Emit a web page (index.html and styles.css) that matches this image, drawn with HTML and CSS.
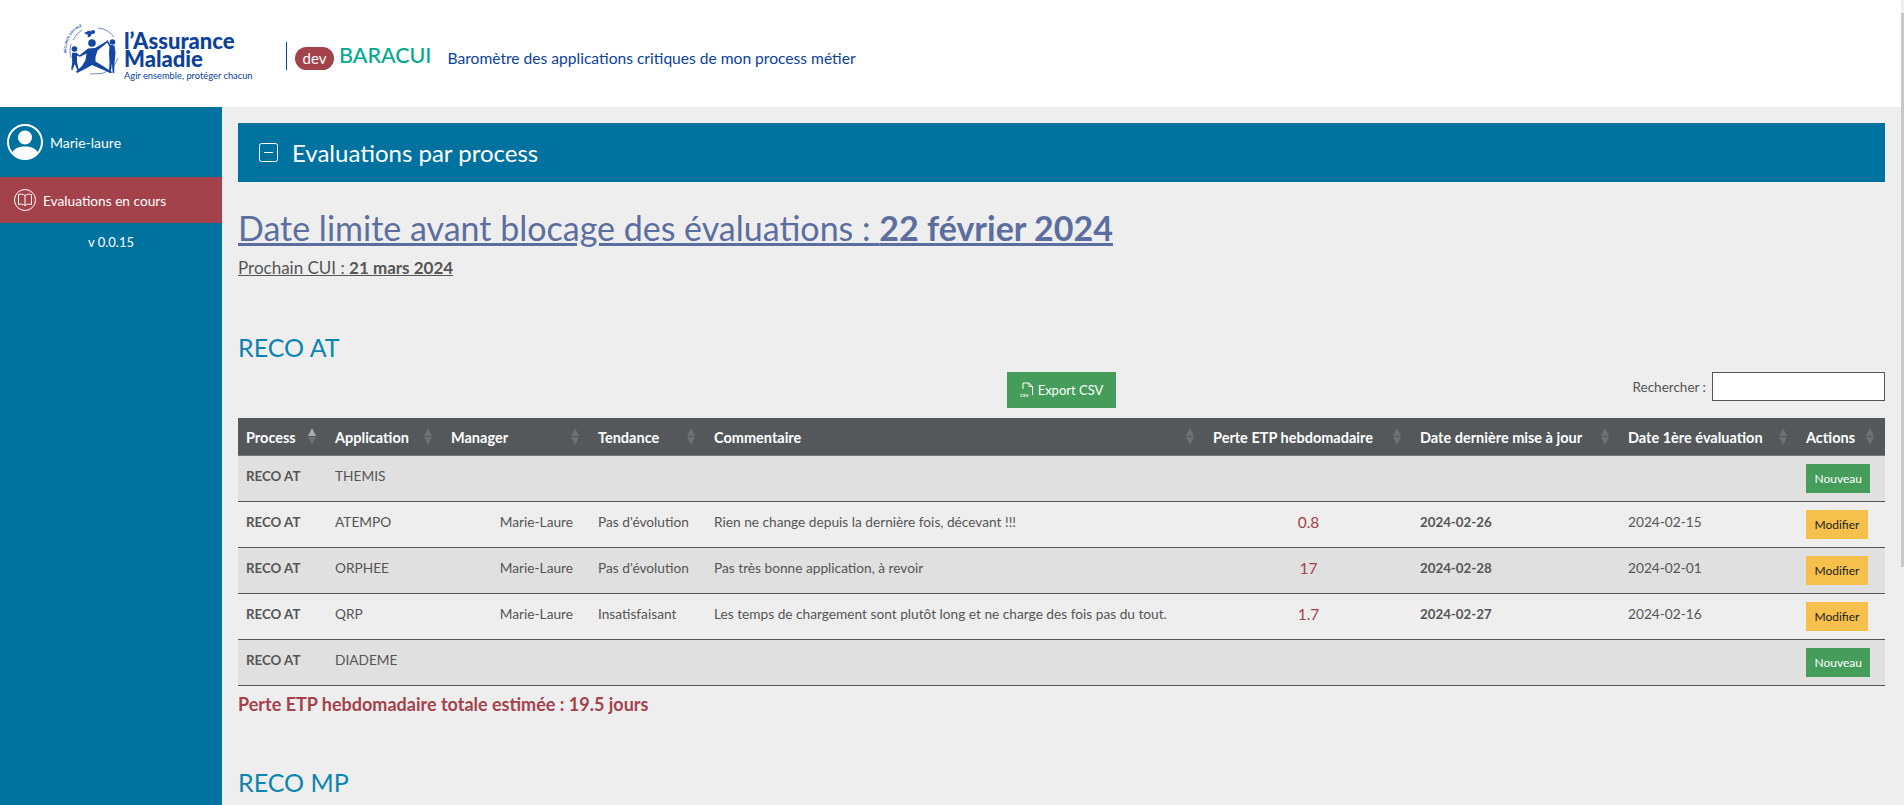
FILE: index.html
```html
<!DOCTYPE html>
<html lang="fr">
<head>
    <meta charset="UTF-8">
    <meta name="viewport" content="width=device-width, initial-scale=1.0">
    <title>BARACUI</title>
    <link rel="stylesheet" href="styles.css">
</head>
<body>
    <header class="topbar">
        <div class="logo">
            <svg class="logo-mark" viewBox="0 0 70 60" aria-hidden="true">
                <defs><path id="logoArc" d="M6.5 33 A27 27 0 0 1 36 3.5"/></defs>
                <text class="logo-arc"><textPath href="#logoArc">SÉCURITÉ SOCIALE</textPath></text>
                <path class="logo-ring" d="M38 8 A22 22 0 0 1 54 17 M58 38 A25 25 0 0 1 42 53.5 L30 54 M11 38 A24 24 0 0 1 11 24 M13 20 A24 24 0 0 1 22 10"/>
                <circle cx="32" cy="23" r="3.8"/>
                <path d="M28 28.500 L35 28 L47 21 L47.800 22.200 L37.500 30.500 L35.500 37 L35.500 41.500 L43 46 L52 52 L51.200 53.200 L40 48.500 L32 45 L25 49 L17 53 L16 51.500 L22 46 L25.500 40 L26.500 33.500 L20 36.800 L19.200 35.500 Z"/>
                <circle cx="14.5" cy="29" r="2.800"/>
                <path d="M12 32.800 L16.500 32.800 L20 35.800 L19.500 36.800 L17 35.500 L17 42 L18.800 50 L17.500 50.500 L14.800 44 L12.500 50 L11.200 49.500 L12.200 42 L12 38 Z"/>
                <circle cx="52.5" cy="22" r="2.800"/>
                <path d="M46.500 20.800 L47.500 20 L50.500 25 L54.500 25.500 L55.500 33 L54.500 43 L54.200 53 L52.600 53 L52 43 L50.500 53 L49 53 L49.500 42 L49 33 L49.500 27 Z"/>
                <circle cx="33" cy="12" r="2"/>
                <path d="M24 13 L27 11.500 L30 10.500 L32 13.500 L30.500 16.500 L27.500 17.500 L28 15 Z"/>
            </svg>
            <div class="logo-text">
                <div class="logo-name">l’Assurance</div>
                <div class="logo-name">Maladie</div>
                <div class="logo-tag">Agir ensemble, protéger chacun</div>
            </div>
        </div>
        <div class="brand">
            <span class="pill">dev</span>
            <span class="brand-name">BARACUI</span>
        </div>
        <div class="subtitle">Baromètre des applications critiques de mon process métier</div>
    </header>

    <div class="layout">
        <nav class="sidebar">
            <div class="profile">
                <svg class="avatar" viewBox="0 0 36 36" aria-hidden="true">
                    <circle class="line" cx="18" cy="18" r="17"/>
                    <circle class="solid" cx="18" cy="13.5" r="7"/>
                    <path class="solid" d="M5.5 28 C8 24 12 22.5 18 22.5 C24 22.5 28 24 30.5 28 C27.5 32 23 34.5 18 34.5 C13 34.5 8.5 32 5.500 28 Z"/>
                </svg>
                <span>Marie-laure</span>
            </div>
            <a class="nav-item" href="#">
                <svg class="nav-icon" viewBox="0 0 22 22" aria-hidden="true">
                    <circle class="line" cx="11" cy="11" r="10.500"/>
                    <path class="line" d="M11 6.500 C9 5 6.500 4.800 4.500 5.500 V15.500 C6.500 14.800 9 15 11 16.500 C13 15 15.500 14.800 17.500 15.500 V5.500 C15.500 4.800 13 5 11 6.500 Z M11 6.500 V16.500"/>
                </svg>
                <span>Evaluations en cours</span>
            </a>
            <div class="version">v 0.0.15</div>
        </nav>

        <main class="content">
            <div class="panel">
                <svg class="panel-icon" viewBox="0 0 19 19" aria-hidden="true">
                    <rect x="0.500" y="0.500" width="18" height="18" rx="2"/>
                    <path d="M5 9.500 H14"/>
                </svg>
                <span>Evaluations par process</span>
            </div>

            <h1 class="deadline">Date limite avant blocage des évaluations : <strong>22 février 2024</strong></h1>
            <p class="next-cui">Prochain CUI : <strong>21 mars 2024</strong></p>

            <section>
                <h2 class="process-title">RECO AT</h2>
                <div class="toolbar">
                    <span></span>
                    <button class="btn-export" type="button">
                        <svg viewBox="0 0 14 16" aria-hidden="true">
                            <path d="M3 7 V1 H9 L12.500 4.500 V13 M9 1 V4.500 H12.500"/>
                            <text x="0" y="14.500">CSV</text>
                        </svg>
                        Export CSV
                    </button>
                    <label class="search">Rechercher : <input type="text"></label>
                </div>
                <table class="eval-table">
                    <thead>
                        <tr>
                            <th class="col-process sorted">Process</th>
                            <th class="col-app">Application</th>
                            <th class="col-manager">Manager</th>
                            <th class="col-trend">Tendance</th>
                            <th class="col-comment">Commentaire</th>
                            <th class="col-loss">Perte ETP hebdomadaire</th>
                            <th class="col-date">Date dernière mise à jour</th>
                            <th class="col-first">Date 1ère évaluation</th>
                            <th class="col-actions">Actions</th>
                        </tr>
                    </thead>
                    <tbody>
                        <tr>
                            <td class="strong">RECO AT</td>
                            <td>THEMIS</td>
                            <td></td><td></td><td></td><td></td><td></td><td></td>
                            <td class="action"><button class="btn btn-new" type="button">Nouveau</button></td>
                        </tr>
                        <tr>
                            <td class="strong">RECO AT</td>
                            <td>ATEMPO</td>
                            <td class="manager">Marie-Laure</td>
                            <td>Pas d'évolution</td>
                            <td>Rien ne change depuis la dernière fois, décevant !!!</td>
                            <td class="loss">0.8</td>
                            <td class="strong">2024-02-26</td>
                            <td>2024-02-15</td>
                            <td class="action"><button class="btn btn-edit" type="button">Modifier</button></td>
                        </tr>
                        <tr>
                            <td class="strong">RECO AT</td>
                            <td>ORPHEE</td>
                            <td class="manager">Marie-Laure</td>
                            <td>Pas d'évolution</td>
                            <td>Pas très bonne application, à revoir</td>
                            <td class="loss">17</td>
                            <td class="strong">2024-02-28</td>
                            <td>2024-02-01</td>
                            <td class="action"><button class="btn btn-edit" type="button">Modifier</button></td>
                        </tr>
                        <tr>
                            <td class="strong">RECO AT</td>
                            <td>QRP</td>
                            <td class="manager">Marie-Laure</td>
                            <td>Insatisfaisant</td>
                            <td>Les temps de chargement sont plutôt long et ne charge des fois pas du tout.</td>
                            <td class="loss">1.7</td>
                            <td class="strong">2024-02-27</td>
                            <td>2024-02-16</td>
                            <td class="action"><button class="btn btn-edit" type="button">Modifier</button></td>
                        </tr>
                        <tr>
                            <td class="strong">RECO AT</td>
                            <td>DIADEME</td>
                            <td></td><td></td><td></td><td></td><td></td><td></td>
                            <td class="action"><button class="btn btn-new" type="button">Nouveau</button></td>
                        </tr>
                    </tbody>
                </table>
                <p class="total">Perte ETP hebdomadaire totale estimée : 19.5 jours</p>
            </section>

            <section>
                <h2 class="process-title next">RECO MP</h2>
            </section>
        </main>
    </div>

    <div class="scrollbar"><div class="scrollbar-thumb"></div></div>
</body>
</html>
```

FILE: styles.css
```css
body {
    font-family: Lato, "Noto Sans", sans-serif;
    font-size: 14px;
    background-color: #eee;
    color: #555;
    margin: 0;
    padding: 0;
}
.scrollbar {
    position: fixed;
    top: 0;
    right: 0;
    bottom: 0;
    width: 3px;
    background-color: #eee;
}
.scrollbar-thumb {
    height: 554px;
    margin-top: 13px;
    background-color: #c8c8c8;
}

/* header */
.topbar {
    display: flex;
    align-items: flex-start;
    height: 107px;
    background-color: #fff;
    color: #0c419a;
}
.logo {
    display: flex;
    margin: 20px 0 0 60px;
    width: 226px;
}
.logo-mark {
    width: 70px;
    height: 60px;
    fill: #1246a0;
    flex: none;
    margin-right: -6px;
}
.logo-ring {
    fill: none;
    stroke: #1246a0;
    stroke-width: 0.6;
}
.logo-arc {
    font-family: "Liberation Sans", sans-serif;
    font-size: 3.4px;
    font-weight: 700;
}
.logo-text {
    margin-top: 12px;
}
.logo-name {
    font-size: 22px;
    font-weight: 900;
    line-height: 18px;
}
.logo-tag {
    font-size: 9.3px;
    line-height: 12px;
    margin-top: 2px;
    white-space: nowrap;
}
.brand {
    display: flex;
    align-items: center;
    height: 28px;
    margin-top: 42px;
    padding-left: 8px;
    border-left: 1px solid #0c419a;
}
.pill {
    display: block;
    width: 39px;
    height: 23px;
    margin-top: 5px;
    line-height: 23px;
    border-radius: 12px;
    background-color: #a4424b;
    color: #fff;
    font-size: 15px;
    text-align: center;
}
.brand-name {
    margin: 0 0 3px 5px;
    color: #00a98f;
    font-size: 21.5px;
    font-weight: 500;
}
.subtitle {
    margin: 47px 0 0 16px;
    font-size: 15.6px;
    line-height: 22px;
}

/* sidebar */
.layout {
    display: flex;
    min-height: 1025px;
}
.sidebar {
    width: 222px;
    flex: none;
    background-color: #00729f;
    color: #fff;
}
.line {
    fill: none;
    stroke: #fff;
}
.solid {
    fill: #fff;
}
.profile {
    display: flex;
    align-items: center;
    height: 70px;
    padding-left: 7px;
    gap: 7px;
}
.avatar {
    width: 36px;
    height: 36px;
}
.avatar .line {
    stroke-width: 2;
}
.nav-item {
    display: flex;
    align-items: center;
    height: 46px;
    padding-left: 14px;
    gap: 7px;
    background-color: #a4424b;
    color: #fff;
    font-size: 13.7px;
    text-decoration: none;
}
.nav-icon {
    width: 22px;
    height: 22px;
}
.version {
    margin-top: 11px;
    font-size: 13px;
    text-align: center;
}

/* main */
.content {
    flex: 1;
    min-width: 0;
    padding: 16px 19px 16px 16px;
}
.panel {
    display: flex;
    align-items: center;
    gap: 14px;
    height: 59px;
    padding-left: 21px;
    background-color: #00729f;
    color: #fff;
    font-size: 24px;
}
.panel-icon {
    width: 19px;
    height: 19px;
    fill: none;
    stroke: #fff;
}
.deadline {
    margin: 24px 0 0;
    font-size: 34px;
    font-weight: 400;
    line-height: 44px;
    color: #5c6ea0;
    text-decoration: underline;
}
.next-cui {
    margin: 6px 0 0;
    font-size: 17px;
    line-height: 24px;
    text-decoration: underline;
}
.process-title {
    margin: 48px 0 0;
    font-size: 25px;
    font-weight: 400;
    line-height: 38px;
    color: #0a85b0;
}
.process-title.next {
    margin-top: 47px;
}
.toolbar {
    display: grid;
    grid-template-columns: 1fr auto 1fr;
    margin-top: 6px;
}
.btn-export {
    display: flex;
    align-items: center;
    justify-content: center;
    gap: 4px;
    width: 109px;
    height: 36px;
    padding: 0;
    border: none;
    background-color: #459c5b;
    color: #fff;
    font-family: inherit;
    font-size: 13px;
}
.btn-export svg {
    width: 14px;
    height: 16px;
}
.btn-export path {
    fill: none;
    stroke: #fff;
}
.btn-export text {
    fill: #fff;
    font-size: 4.5px;
    font-weight: 700;
}
.search {
    display: flex;
    align-items: center;
    justify-self: end;
    align-self: start;
    font-size: 13.5px;
}
.search input {
    width: 173px;
    height: 29px;
    margin-left: 6px;
    padding: 0 4px;
    box-sizing: border-box;
    border: 1px solid #555;
    background-color: #fff;
}

/* table */
.eval-table {
    width: 100%;
    margin-top: 10px;
    table-layout: fixed;
    border-collapse: separate;
    border-spacing: 0;
}
.eval-table th {
    position: relative;
    height: 38px;
    padding: 1px 8px 0;
    box-sizing: border-box;
    border-bottom: 1px solid #777;
    background-color: #54585a;
    color: #fff;
    text-align: left;
    font-size: 14.5px;
    white-space: nowrap;
}
.eval-table th::before,
.eval-table th::after {
    content: "";
    position: absolute;
    right: 11px;
    border-left: 4.500px solid transparent;
    border-right: 4.500px solid transparent;
}
.eval-table th::before {
    top: 10px;
    border-bottom: 8px solid #6e7072;
}
.eval-table th::after {
    top: 19px;
    border-top: 8px solid #6e7072;
}
.eval-table th.sorted::before {
    border-bottom-color: #aaa;
}
.col-process { width: 89px; }
.col-app { width: 116px; }
.col-manager { width: 147px; }
.col-trend { width: 116px; }
.col-loss { width: 207px; }
.col-date { width: 208px; }
.col-first { width: 178px; }
.col-actions { width: 87px; }

.eval-table td {
    padding: 9px 8px 8px;
    border-bottom: 1px solid #555;
    font-size: 13.7px;
    line-height: 22px;
    vertical-align: top;
}
.eval-table td.action {
    padding-top: 8px;
}
.eval-table tbody tr:nth-child(odd) {
    background-color: #e0e0e0;
}
.eval-table td.strong {
    font-size: 13.3px;
    font-weight: 700;
}
.eval-table td.manager {
    padding-right: 17px;
    text-align: right;
}
.eval-table td.loss {
    color: #a4424b;
    font-size: 15.5px;
    text-align: center;
}
.btn {
    display: block;
    height: 29px;
    padding: 0 8.5px;
    border: none;
    font-family: inherit;
    font-size: 12px;
}
.btn-new {
    background-color: #459c5b;
    color: #fff;
}
.btn-edit {
    background-color: #f5c04c;
    color: #222;
}
.total {
    margin: 6px 0 0;
    font-size: 18px;
    font-weight: 700;
    line-height: 24px;
    color: #a4424b;
}
```
